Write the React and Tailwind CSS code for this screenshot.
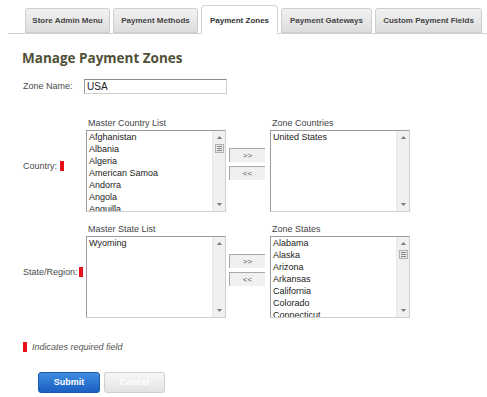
import React from 'react';

const countries = ['Afghanistan', 'Albania', 'Algeria', 'American Samoa', 'Andorra', 'Angola', 'Anguilla'];
const zoneStates = ['Alabama', 'Alaska', 'Arizona', 'Arkansas', 'California', 'Colorado', 'Connecticut'];

const tabs = [
  ['Store Admin Menu', 'w-[85px]'],
  ['Payment Methods', 'w-[85px]'],
  ['Payment Zones', 'w-[77px]'],
  ['Payment Gateways', 'w-[91px]'],
  ['Custom Payment Fields', 'w-[107px]'],
];

function Tab({ label, width, active }) {
  if (active) {
    return (
      <div className={`${width} h-[29px] pt-[3px] -mb-px flex items-center justify-center bg-white border border-[#d2d2d2] border-b-white rounded-t-[4px] text-[8px] font-bold text-[#333] whitespace-nowrap`}>
        {label}
      </div>
    );
  }
  return (
    <div className={`${width} h-[25px] flex items-center justify-center bg-gradient-to-b from-[#f2f2f2] to-[#dddddd] border border-[#cdcdcd] rounded-t-[3px] text-[8px] font-bold text-[#444] whitespace-nowrap`}>
      {label}
    </div>
  );
}

function ScrollBar({ thumb }) {
  return (
    <div className="w-[13px] bg-[#f0f0f0] border-l border-[#e8e8e8] flex flex-col items-center justify-between pt-[5px] pb-[5px]">
      <div className="flex flex-col items-center">
        <svg width="5" height="3" viewBox="0 0 5 3"><path d="M0 3 L2.5 0 L5 3 Z" fill="#7a7a7a" /></svg>
        {thumb ? (
          <div className="mt-[5px] w-[9px] h-[9px] bg-[#e6e6e6] border border-[#b0b0b0] flex flex-col items-center justify-center gap-[1px]">
            <div className="w-[5px] h-px bg-[#8a8a8a]" />
            <div className="w-[5px] h-px bg-[#8a8a8a]" />
            <div className="w-[5px] h-px bg-[#8a8a8a]" />
          </div>
        ) : null}
      </div>
      <svg width="5" height="3" viewBox="0 0 5 3"><path d="M0 0 L2.5 3 L5 0 Z" fill="#7a7a7a" /></svg>
    </div>
  );
}

function ListBox({ title, items, thumb }) {
  return (
    <div className="flex flex-col">
      <div className="text-[9px] leading-[12px] text-[#444] pl-[2px] mb-px whitespace-nowrap">{title}</div>
      <div className="w-[140px] h-[82px] flex border border-[#cfcfcf] border-t-[#9c9c9c] border-l-[#9c9c9c] bg-white overflow-hidden">
        <div className="flex-1 pl-[2px] text-[9px] leading-[12px] text-[#222]">
          {items.map((it) => (
            <div key={it} className="whitespace-nowrap">{it}</div>
          ))}
        </div>
        <ScrollBar thumb={thumb} />
      </div>
    </div>
  );
}

function MoveButtons() {
  return (
    <div className="flex flex-col gap-[4px] mt-[31px] ml-[3px] mr-[5px]">
      {['>>', '<<'].map((s) => (
        <div key={s} className="w-[36px] h-[14px] flex items-center justify-center bg-[#f0f0f0] border-t border-l border-[#a8a8a8] text-[8px] text-[#555]">
          {s}
        </div>
      ))}
    </div>
  );
}

function Required() {
  return <span className="inline-block w-[4px] h-[10px] bg-[#e8101a]" />;
}

export default function App() {
  return (
    <div className="w-[487px] h-[397px] bg-white font-['Liberation_Sans',Arial,sans-serif] overflow-hidden">
      {/* Tabs */}
      <div className="ml-[8px] border-b border-[#d0d0d0] flex items-end gap-[3px] pl-[17px] h-[34px]">
        {tabs.map(([label, width]) => (
          <Tab key={label} label={label} width={width} active={label === 'Payment Zones'} />
        ))}
      </div>

      <div className="pl-[22px]">
        <h1 className="mt-[12px] font-['Open_Sans',sans-serif] font-bold text-[13.5px] leading-[24px] text-[#505036]">
          Manage Payment Zones
        </h1>

        {/* Zone name */}
        <div className="flex items-center mt-[9px]">
          <div className="w-[62px] pl-px text-[9px] text-[#4a4a4a]">Zone Name:</div>
          <div className="w-[143px] h-[15px] border border-[#cfcfcf] border-t-[#8c8c8c] border-l-[#9c9c9c] flex items-center pl-[2px] text-[10px] text-[#222]">
            USA
          </div>
        </div>

        {/* Country */}
        <div className="flex items-start mt-[23px]">
          <div className="w-[64px] pl-px flex items-center gap-[3px] text-[9px] leading-[10px] text-[#4a4a4a] mt-[44px]">
            <span>Country:</span>
            <Required />
          </div>
          <ListBox title="Master Country List" items={countries} thumb />
          <MoveButtons />
          <ListBox title="Zone Countries" items={['United States']} />
        </div>

        {/* State */}
        <div className="flex items-start mt-[11px]">
          <div className="w-[64px] pl-px flex items-center gap-px text-[9px] leading-[10px] text-[#4a4a4a] mt-[44px] whitespace-nowrap">
            <span>State/Region:</span>
            <Required />
          </div>
          <ListBox title="Master State List" items={['Wyoming']} />
          <MoveButtons />
          <ListBox title="Zone States" items={zoneStates} thumb />
        </div>

        {/* Required note */}
        <div className="flex items-center gap-[5px] mt-[24px] ml-px h-[10px]">
          <Required />
          <span className="text-[9px] leading-[10px] italic text-[#555]">Indicates required field</span>
        </div>

        {/* Actions */}
        <div className="flex gap-[4px] mt-[20px] ml-[16px]">
          <button className="w-[62px] h-[21px] rounded-[3px] bg-gradient-to-b from-[#3f8de2] to-[#1a5fc2] border border-[#1a58ad] text-white text-[9px] font-bold">
            Submit
          </button>
          <button className="w-[61px] h-[21px] rounded-[3px] bg-gradient-to-b from-[#f7f7f7] to-[#e3e3e3] border border-[#cfcfcf] text-white text-[9px] font-bold">
            Cancel
          </button>
        </div>
      </div>
    </div>
  );
}
